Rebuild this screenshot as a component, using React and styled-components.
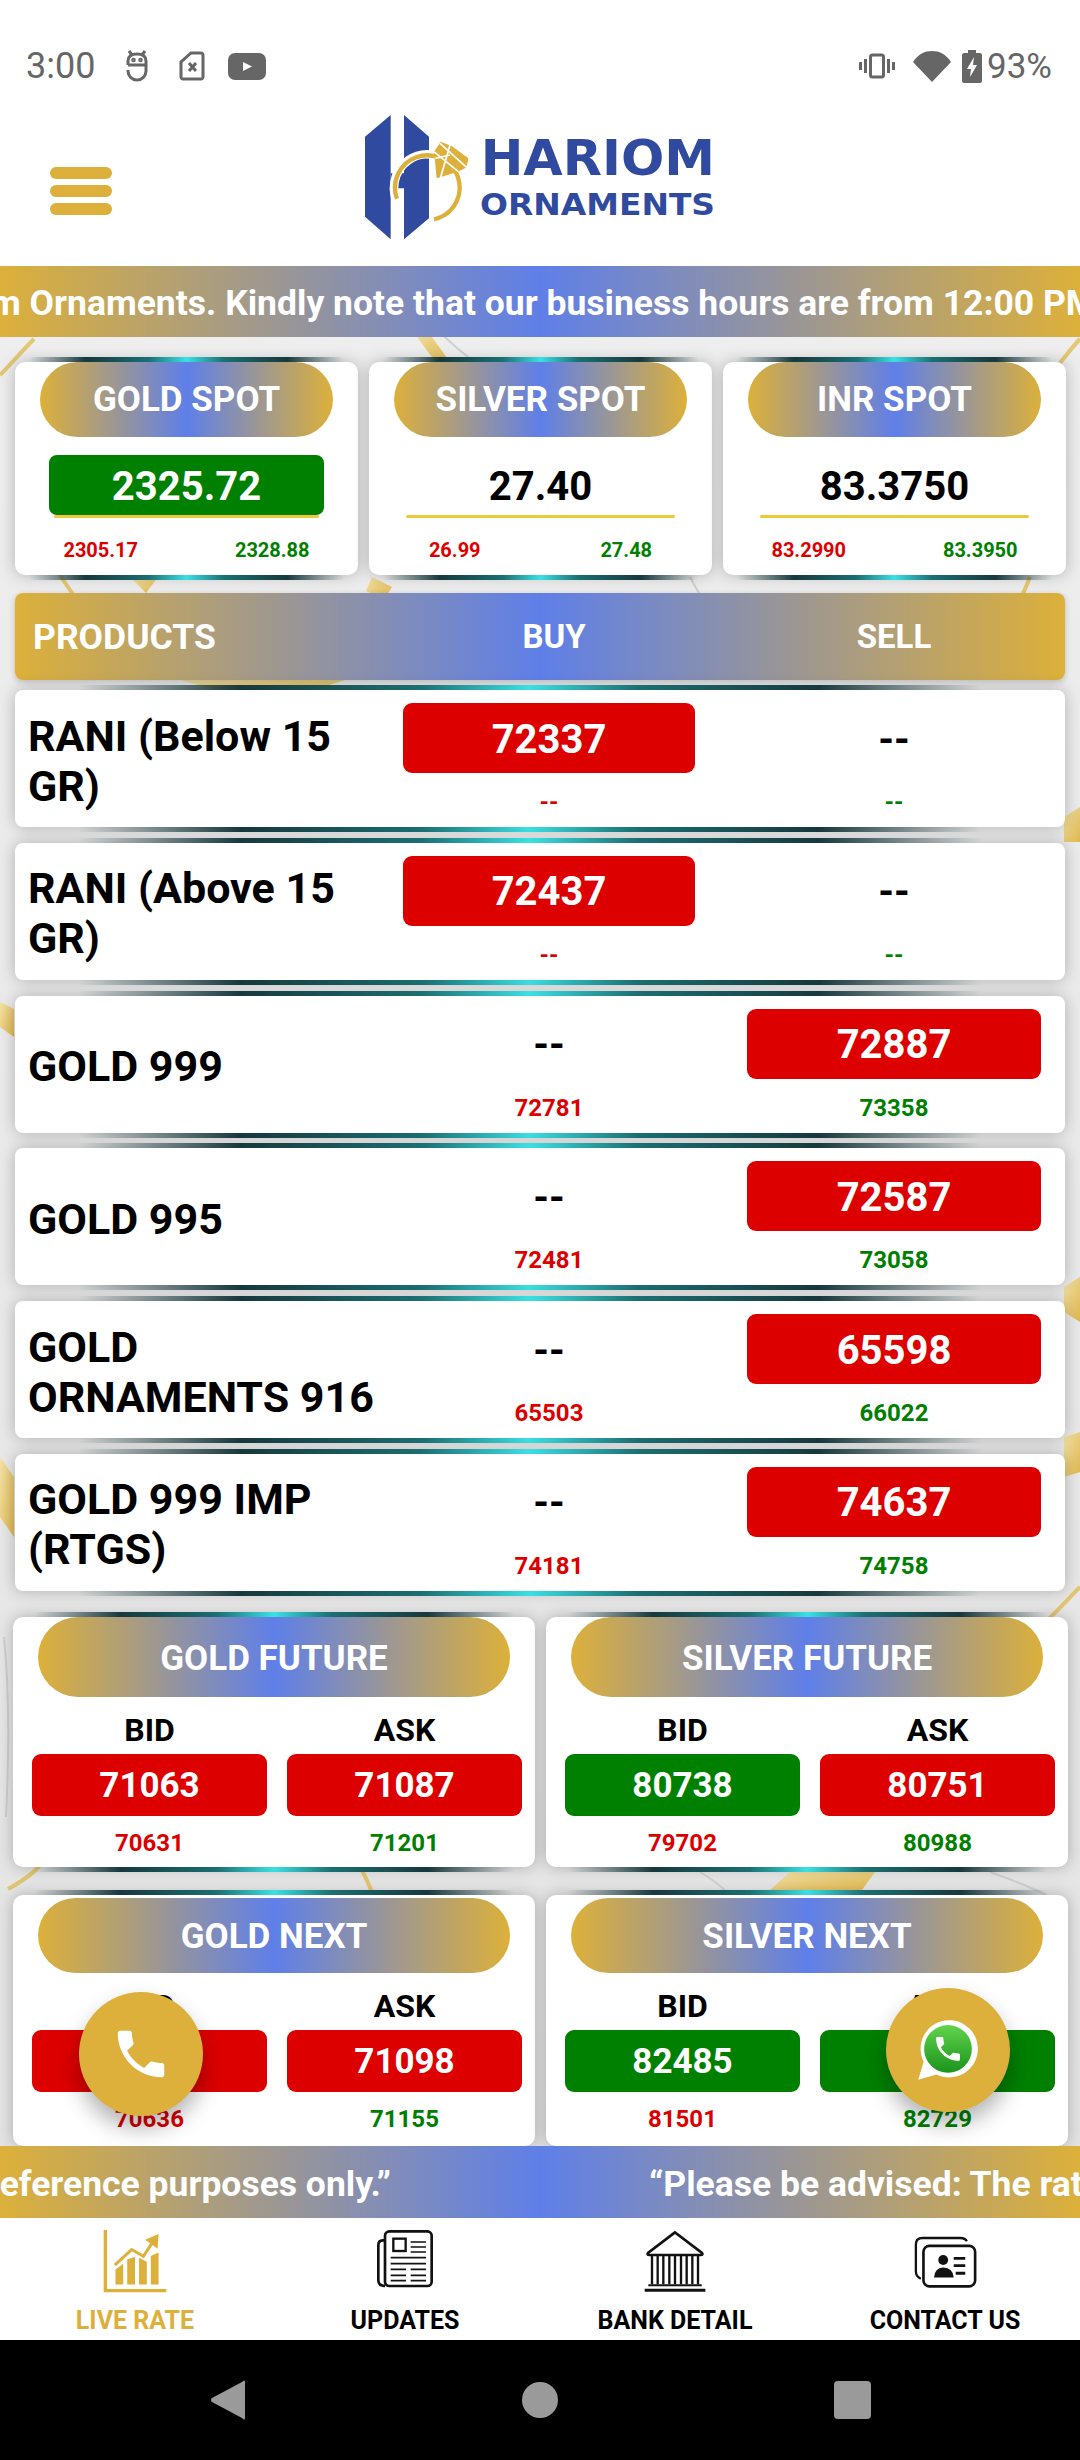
import React from "react";
import styled, { createGlobalStyle, css } from "styled-components";

const GOLD = "#dcb03a";
const BLUE = "#5f7fe8";
const RED = "#dd0000";
const GREEN = "#008000";
const band = `linear-gradient(90deg, ${GOLD} 0%, ${BLUE} 50%, ${GOLD} 100%)`;
const teal =
  "linear-gradient(90deg, rgba(23,57,61,0) 0%, #17393d 18%, #1b6f72 38%, #3be0e4 50%, #1b6f72 62%, #17393d 82%, rgba(23,57,61,0) 100%)";

const products = [
  { name: "RANI (Below 15 GR)", buy: "72337", sell: "--", low: "--", high: "--" },
  { name: "RANI (Above 15 GR)", buy: "72437", sell: "--", low: "--", high: "--" },
  { name: "GOLD 999", buy: "--", sell: "72887", low: "72781", high: "73358" },
  { name: "GOLD 995", buy: "--", sell: "72587", low: "72481", high: "73058" },
  { name: "GOLD ORNAMENTS 916", buy: "--", sell: "65598", low: "65503", high: "66022" },
  { name: "GOLD 999 IMP (RTGS)", buy: "--", sell: "74637", low: "74181", high: "74758" },
];

const quotes = [
  { title: "GOLD FUTURE", bid: "71063", ask: "71087", bidTone: RED, askTone: RED, low: "70631", high: "71201" },
  { title: "SILVER FUTURE", bid: "80738", ask: "80751", bidTone: GREEN, askTone: RED, low: "79702", high: "80988" },
  { title: "GOLD NEXT", bid: "71074", ask: "71098", bidTone: RED, askTone: RED, low: "70636", high: "71155", next: true },
  { title: "SILVER NEXT", bid: "82485", ask: "82512", bidTone: GREEN, askTone: GREEN, low: "81501", high: "82729", next: true },
];

const PHONE =
  "M6.62 10.79c1.44 2.83 3.76 5.14 6.59 6.59l2.2-2.2c.27-.27.67-.36 1.02-.24 1.12.37 2.33.57 3.57.57.55 0 1 .45 1 1V20c0 .55-.45 1-1 1-9.39 0-17-7.61-17-17 0-.55.45-1 1-1h3.5c.55 0 1 .45 1 1 0 1.25.2 2.45.57 3.57.11.35.03.74-.25 1.02l-2.2 2.2z";

const Logo = () => (
  <LogoSvg viewBox="0 0 1260 510">
    <path d="M105 140 182 75V448L105 380Z" fill="#2f4a9f" />
    <path d="M222 75 297 140V385L222 448V295H182V250H222Z" fill="#2f4a9f" />
    <circle cx="292" cy="293" r="100" fill="none" stroke="#fff" strokeWidth="26" strokeDasharray="440 190" transform="rotate(-215 292 293)" />
    <circle cx="292" cy="293" r="97" fill="none" stroke={GOLD} strokeWidth="13" strokeDasharray="470 160" transform="rotate(-200 292 293)" />
    <path d="M332 155 365 168 415 205 410 232 385 245 320 265 312 185Z" fill={GOLD} />
    <path d="M312 185 385 245M360 165 332 262M330 160 410 232M316 205 360 195" stroke="#fff" strokeWidth="5" fill="none" />
    <LogoWord x="452" y="255" fontSize="148" textLength="703" lengthAdjust="spacingAndGlyphs">HARIOM</LogoWord>
    <LogoWord x="450" y="375" fontSize="90" textLength="705" lengthAdjust="spacingAndGlyphs">ORNAMENTS</LogoWord>
  </LogoSvg>
);

const Marble = () => (
  <MarbleSvg viewBox="0 0 1080 1809" preserveAspectRatio="none">
    <defs>
      <linearGradient id="vein" x1="0" y1="0" x2="1" y2="1">
        <stop offset="0" stopColor="#f3e3a8" />
        <stop offset="1" stopColor="#dfb74f" />
      </linearGradient>
    </defs>
    <g fill="none" stroke="#e0bf5c" strokeWidth="4" opacity="0.85">
      <path d="M0 38C12 26 22 14 34 2" />
      <path d="M60 238C75 262 90 280 112 308" />
      <path d="M1030 240C1024 256 1016 272 1006 290" />
      <path d="M1060 26C1068 16 1074 8 1080 2" />
      <path d="M8 1552C30 1540 40 1530 44 1522" />
      <path d="M360 1530C366 1540 370 1550 374 1560" />
      <path d="M1040 1290C1056 1276 1068 1262 1080 1250" />
    </g>
    <g fill="url(#vein)">
      <path d="M410 -10 432 0 452 28 436 26Z" />
      <path d="M372 240 392 250 384 262 366 254Z" />
      <path d="M130 240 158 240 146 256Z" />
      <path d="M180 343 345 343 310 354 220 354Z" />
      <path d="M875 1535 862 1553 770 1553 790 1535Z" />
      <path d="M0 665 14 672 14 700 0 690Z" />
      <path d="M1064 950 1080 940 1080 985 1064 975Z" />
      <path d="M1064 480 1080 470 1080 505 1064 505Z" />
      <path d="M1064 1100 1080 1095 1080 1135 1064 1140Z" />
      <path d="M0 1120 14 1140 14 1200 0 1180Z" />
    </g>
    <g fill="none" stroke="#cfcfcf" strokeWidth="2">
      <path d="M440 -5C452 8 466 18 480 30" />
      <path d="M690 240C698 256 708 270 716 282" />
      <path d="M990 1535C1010 1542 1030 1550 1046 1558" />
      <path d="M700 1535C712 1542 722 1550 730 1558" />
      <path d="M4 1300C8 1340 10 1400 6 1480" />
    </g>
  </MarbleSvg>
);

const SpotBox = ({ title, value, low, high, boxed }) => (
  <SpotCard>
    <Pill>{title}</Pill>
    <SpotValue $boxed={boxed}>{value}</SpotValue>
    <GoldRule $boxed={boxed} />
    <SpotRange>
      <Sub $tone={RED} $size={20}>{low}</Sub>
      <Sub $tone={GREEN} $size={20}>{high}</Sub>
    </SpotRange>
  </SpotCard>
);

const PriceCell = ({ value, sub, tone, wide }) => (
  <Cell $wide={wide}>
    {value === "--" ? <Plain>--</Plain> : <PriceBox $tone={RED}>{value}</PriceBox>}
    <RowSub $tone={tone}>{sub}</RowSub>
  </Cell>
);

const QuoteCard = ({ q }) => (
  <Quote>
    <QuotePill $next={q.next}>{q.title}</QuotePill>
    <QuoteGrid>
      <QuoteLabel>BID</QuoteLabel>
      <QuoteLabel>ASK</QuoteLabel>
      <QuoteBox $tone={q.bidTone}>{q.bid}</QuoteBox>
      <QuoteBox $tone={q.askTone}>{q.ask}</QuoteBox>
      <Sub $tone={RED} $size={24}>{q.low}</Sub>
      <Sub $tone={GREEN} $size={24}>{q.high}</Sub>
    </QuoteGrid>
  </Quote>
);

export default function App() {
  return (
    <Page>
      <GlobalStyle />
      <StatusBar>
        <Time>3:00</Time>
        <StatusIcon $gap={30} width="24" height="32" viewBox="0 0 24 32" fill="none" stroke="#666" strokeWidth="3">
          <path d="M3 15V11C3 6 7 4 12 4s9 2 9 7V21C21 26 17 30 12 30S3 26 3 21V20M3 15H21M4 1l3 4M20 1l-3 4" />
          <circle cx="8.500" cy="10" r="0.800" fill="#666" />
          <circle cx="15.500" cy="10" r="0.800" fill="#666" />
        </StatusIcon>
        <StatusIcon $gap={30} width="26" height="30" viewBox="0 0 26 30" fill="none" stroke="#666" strokeWidth="3">
          <path d="M12 2h10c1 0 2 1 2 2v22c0 1-1 2-2 2H4c-1 0-2-1-2-2V11ZM10 12l7 8M17 12l-7 8" />
        </StatusIcon>
        <StatusIcon $gap={23} width="38" height="27" viewBox="0 0 38 27">
          <rect width="38" height="27" rx="7" fill="#666" />
          <path d="M15 9l9 4.500-9 4.500z" fill="#fff" />
        </StatusIcon>
        <StatusRight>
          <StatusIcon width="36" height="26" viewBox="0 0 36 26" fill="none" stroke="#666" strokeWidth="3">
            <rect x="11.500" y="2" width="13" height="22" rx="2" />
            <path d="M6.500 6v14M1.500 9v8M29.500 6v14M34.500 9v8" />
          </StatusIcon>
          <StatusIcon $gap={18} width="38" height="32" viewBox="0 0 38 32">
            <path d="M0 12C5 4 12 1 19 1s14 3 19 11L19 32Z" fill="#666" />
          </StatusIcon>
          <StatusIcon $gap={11} width="20" height="33" viewBox="0 0 20 33">
            <path d="M6 0h8v3h4c1 0 2 1 2 2v26c0 1-1 2-2 2H2c-1 0-2-1-2-2V5c0-1 1-2 2-2h4Z" fill="#666" />
            <path d="M12 7 5 19h4l-1 8 7-12h-4Z" fill="#fff" />
          </StatusIcon>
          <Percent>93%</Percent>
        </StatusRight>
      </StatusBar>

      <Header>
        <Burger>
          <span />
          <span />
          <span />
        </Burger>
        <Logo />
      </Header>

      <Ticker>
        <TickerText $shift={-10}>m Ornaments. Kindly note that our business hours are from 12:00 PM</TickerText>
      </Ticker>

      <Main>
        <Marble />
        <SpotGrid>
          <SpotBox title="GOLD SPOT" value="2325.72" low="2305.17" high="2328.88" boxed />
          <SpotBox title="SILVER SPOT" value="27.40" low="26.99" high="27.48" />
          <SpotBox title="INR SPOT" value="83.3750" low="83.2990" high="83.3950" />
        </SpotGrid>

        <TableHead>
          <span>PRODUCTS</span>
          <HeadCol>BUY</HeadCol>
          <HeadCol>SELL</HeadCol>
        </TableHead>

        <Rows>
          {products.map((p) => (
            <Row key={p.name}>
              <RowName>{p.name}</RowName>
              <PriceCell value={p.buy} sub={p.low} tone={RED} />
              <PriceCell value={p.sell} sub={p.high} tone={GREEN} wide />
            </Row>
          ))}
        </Rows>

        <QuoteGridOuter>
          {quotes.map((q) => (
            <QuoteCard key={q.title} q={q} />
          ))}
        </QuoteGridOuter>

        <Fab $left={79} $top={1655}>
          <svg width="62" height="62" viewBox="0 0 24 24">
            <path d={PHONE} fill="#fff" />
          </svg>
        </Fab>
        <Fab $left={886} $top={1651}>
          <svg width="70" height="70" viewBox="0 0 66 66">
            <defs>
              <linearGradient id="wa" x1="0" y1="0" x2="0" y2="1">
                <stop offset="0" stopColor="#62d34c" />
                <stop offset="1" stopColor="#1a941c" />
              </linearGradient>
            </defs>
            <path d="M5 61 10 44A27 27 0 1 1 22 56Z" fill="#fff" />
            <circle cx="33" cy="32" r="22.500" fill="url(#wa)" />
            <path d={PHONE} fill="#fff" transform="translate(18 17) scale(1.25)" />
          </svg>
        </Fab>
      </Main>

      <Ticker $bottom>
        <TickerText $shift={-13}>
          reference purposes only.”<TickerGap />“Please be advised: The rates
        </TickerText>
      </Ticker>

      <Nav>
        <NavItem $active>
          <svg width="64" height="64" viewBox="70 15 190 190">
            <path d="M77 18V198H258" fill="none" stroke={GOLD} strokeWidth="10" />
            <path d="M107 135 130 118V180H107ZM142 105 165 98V180H142ZM177 100 200 112V180H177ZM212 95 235 85V180H212Z" fill={GOLD} />
            <path d="M105 122 155 76 190 96 216 56" fill="none" stroke={GOLD} strokeWidth="9" />
            <path d="M195 47 235 30 232 74Z" fill={GOLD} />
          </svg>
          <NavLabel>LIVE RATE</NavLabel>
        </NavItem>
        <NavItem>
          <svg width="58" height="60" viewBox="888 22 174 178" fill="none" stroke="#111">
            <rect x="915" y="28" width="140" height="164" rx="13" strokeWidth="8" />
            <path d="M915 55H908Q895 55 895 70V175Q895 192 915 192" strokeWidth="8" />
            <rect x="940" y="50" width="37" height="37" strokeWidth="7" />
            <path d="M992 60H1038M992 75H1038M992 90H1038M932 107H1038M932 125H1038M932 142H978M992 142H1038M932 160H978M992 160H1038M932 176H978M992 176H1038" strokeWidth="5" />
          </svg>
          <NavLabel>UPDATES</NavLabel>
        </NavItem>
        <NavItem>
          <svg width="62" height="64" viewBox="72 15 186 190" fill="none" stroke="#111">
            <path d="M165 24 84 86Q80 92 88 92H242Q250 92 246 86Z" strokeWidth="8" />
            <path d="M96 95V180M113 95V180M130 95V180M148 95V180M165 95V180M183 95V180M200 95V180M217 95V180M234 95V180" strokeWidth="7" />
            <path d="M85 183H245" strokeWidth="6" />
            <path d="M74 198H256" strokeWidth="9" />
          </svg>
          <NavLabel>BANK DETAIL</NavLabel>
        </NavItem>
        <NavItem>
          <ContactIcon width="63" height="52" viewBox="880 32 190 158" fill="none" stroke="#111">
            <path d="M1040 48Q1035 38 1020 38H905Q885 38 885 58V140Q885 155 900 162" strokeWidth="7" />
            <rect x="908" y="62" width="157" height="123" rx="18" strokeWidth="8" />
            <circle cx="968" cy="105" r="15" fill="#111" stroke="none" />
            <path d="M940 158Q942 130 968 128Q998 130 1000 158Z" fill="#111" stroke="none" />
            <path d="M1000 100H1035M1000 122H1035M1006 145H1035" strokeWidth="9" />
          </ContactIcon>
          <NavLabel>CONTACT US</NavLabel>
        </NavItem>
      </Nav>

      <SystemBar>
        <svg width="36" height="40" viewBox="0 0 36 40">
          <path d="M35 2V38Q35 41 32 38L2 22Q0 20 2 18L32 2Q35 -1 35 2Z" fill="#9a9a9a" />
        </svg>
        <HomeDot />
        <RecentSquare />
      </SystemBar>
    </Page>
  );
}

const GlobalStyle = createGlobalStyle`
  html, body { margin: 0; padding: 0; background: #fff; }
  * { box-sizing: border-box; }
  body { font-family: Roboto, "Liberation Sans", sans-serif; }
`;

const Page = styled.div`
  width: 1080px;
  height: 2460px;
  display: flex;
  flex-direction: column;
  overflow: hidden;
`;

const StatusBar = styled.div`
  height: 90px;
  padding: 42px 28px 0 26px;
  display: flex;
  align-items: center;
  color: #666;
`;

const Time = styled.span`
  font-size: 36px;
`;

const StatusIcon = styled.svg`
  flex: none;
  margin-left: ${(p) => p.$gap || 0}px;
`;

const StatusRight = styled.div`
  margin-left: auto;
  display: flex;
  align-items: center;
`;

const Percent = styled.span`
  font-size: 35px;
  margin-left: 5px;
`;

const Header = styled.div`
  height: 176px;
  display: flex;
  align-items: flex-start;
  padding-left: 50px;
`;

const Burger = styled.div`
  width: 62px;
  margin: 77px 218px 0 0;
  display: flex;
  flex-direction: column;
  gap: 6px;

  span {
    height: 12px;
    border-radius: 6px;
    background: ${GOLD};
  }
`;

const LogoSvg = styled.svg`
  width: 420px;
  height: 170px;
  flex: none;
`;

const LogoWord = styled.text`
  font-family: "DejaVu Sans", sans-serif;
  font-weight: 700;
  fill: #2f4a9f;
`;

const Ticker = styled.div`
  height: ${(p) => (p.$bottom ? 72 : 71)}px;
  padding-top: 3px;
  flex: none;
  background: ${band};
  display: flex;
  align-items: center;
  overflow: hidden;
  white-space: nowrap;
  position: relative;
  z-index: 2;
`;

const TickerText = styled.div`
  margin-left: ${(p) => p.$shift}px;
  color: #fff;
  font-size: 35.500px;
  font-weight: 700;
`;

const TickerGap = styled.span`
  display: inline-block;
  width: 258px;
`;

const Main = styled.div`
  position: relative;
  flex: 1;
  padding-top: 25px;
  background: linear-gradient(180deg, #eeeeee, #e4e4e4);
  overflow: hidden;
`;

const MarbleSvg = styled.svg`
  position: absolute;
  inset: 0;
  width: 100%;
  height: 100%;
  filter: blur(0.6px);
`;

const glow = css`
  position: relative;
  background: #fff;
  box-shadow: 0 0 16px rgba(0, 0, 0, 0.25);

  &::before,
  &::after {
    content: "";
    position: absolute;
    left: 4%;
    right: 4%;
    height: 5px;
    background: ${teal};
  }

  &::before {
    top: -5px;
  }

  &::after {
    bottom: -5px;
  }
`;

const SpotGrid = styled.div`
  position: relative;
  display: grid;
  grid-template-columns: repeat(3, 343px);
  column-gap: 11px;
  padding: 0 15px;
`;

const SpotCard = styled.div`
  ${glow}
  height: 213px;
  border-radius: 10px;
`;

const pillBase = css`
  background: ${band};
  color: #fff;
  font-weight: 700;
  display: flex;
  align-items: center;
  justify-content: center;
`;

const Pill = styled.div`
  ${pillBase}
  height: 75px;
  margin: 0 25px;
  border-radius: 38px;
  font-size: 35px;
`;

const SpotValue = styled.div`
  height: 60px;
  margin: 18px 34px 0;
  padding-top: 2px;
  border-radius: 8px;
  display: flex;
  align-items: center;
  justify-content: center;
  font-size: 40px;
  font-weight: 700;
  color: ${(p) => (p.$boxed ? "#fff" : "#000")};
  background: ${(p) => (p.$boxed ? GREEN : "transparent")};
`;

const GoldRule = styled.div`
  height: 3px;
  margin: 0 ${(p) => (p.$boxed ? 39 : 37)}px;
  border-radius: 2px;
  background: #f0c83c;
`;

const SpotRange = styled.div`
  display: grid;
  grid-template-columns: 1fr 1fr;
  margin-top: 17px;
`;

const Sub = styled.div`
  text-align: center;
  font-size: ${(p) => p.$size}px;
  line-height: 30px;
  font-weight: 700;
  color: ${(p) => p.$tone};
`;

const TableHead = styled.div`
  position: relative;
  height: 87px;
  margin: 18px 15px 0;
  padding: 0 24px 0 18px;
  border-radius: 8px;
  background: ${band};
  color: #fff;
  font-size: 35.500px;
  font-weight: 700;
  display: grid;
  grid-template-columns: 370px 302px 336px;
  align-items: center;
  box-shadow: 0 2px 6px rgba(0, 0, 0, 0.2);
`;

const HeadCol = styled.span`
  font-size: 33px;
  text-align: center;
  &:last-child {
    padding-left: 42px;
  }
`;

const Rows = styled.div`
  position: relative;
  margin: 10px 15px 0;
  display: flex;
  flex-direction: column;
  gap: 15.800px;
`;

const Row = styled.div`
  ${glow}
  height: 137px;
  border-radius: 8px;
  padding: 13px 24px 0 13px;
  display: grid;
  grid-template-columns: 375px 292px 346px;

  &::before,
  &::after {
    left: 6%;
    right: 8%;
  }
`;

const RowName = styled.div`
  align-self: center;
  margin-top: -9px;
  padding-right: 22px;
  font-size: 43px;
  line-height: 50px;
  font-weight: 700;
  color: #000;
`;

const Cell = styled.div`
  display: flex;
  flex-direction: column;
  margin-left: ${(p) => (p.$wide ? 52 : 0)}px;
`;

const PriceBox = styled.div`
  height: 70px;
  padding-top: 2px;
  border-radius: 9px;
  background: ${(p) => p.$tone};
  color: #fff;
  font-size: 40px;
  font-weight: 700;
  display: flex;
  align-items: center;
  justify-content: center;
`;

const Plain = styled(PriceBox)`
  background: transparent;
  color: #000;
`;

const RowSub = styled.div`
  margin-top: 14px;
  line-height: 30px;
  text-align: center;
  font-size: 24px;
  font-weight: 700;
  color: ${(p) => p.$tone};
`;

const QuoteGridOuter = styled.div`
  position: relative;
  margin-top: 26px;
  padding: 0 12px 0 13px;
  display: grid;
  grid-template-columns: 522px 522px;
  column-gap: 11px;
  row-gap: 28px;
`;

const Quote = styled.div`
  ${glow}
  height: 251px;
  border-radius: 10px;

  &:nth-child(-n + 2) {
    height: 250px;
  }
`;

const QuotePill = styled.div`
  ${pillBase}
  height: ${(p) => (p.$next ? 75 : 80)}px;
  margin: ${(p) => (p.$next ? 3 : 0)}px 25px 0;
  padding-top: 3px;
  border-radius: 40px;
  font-size: 35px;
`;

const QuoteGrid = styled.div`
  display: grid;
  grid-template-columns: 235px 235px;
  column-gap: 20px;
  padding-left: 19px;
`;

const QuoteLabel = styled.div`
  margin-top: 14px;
  height: 38px;
  line-height: 38px;
  font-size: 32px;
  font-weight: 700;
  text-align: center;
  color: #000;
`;

const QuoteBox = styled.div`
  height: 62px;
  margin: 5px 0 12px;
  padding-top: 2px;
  border-radius: 9px;
  background: ${(p) => p.$tone};
  color: #fff;
  font-size: 35px;
  font-weight: 700;
  display: flex;
  align-items: center;
  justify-content: center;
`;

const Fab = styled.div`
  position: absolute;
  left: ${(p) => p.$left}px;
  top: ${(p) => p.$top}px;
  width: 124px;
  height: 124px;
  border-radius: 50%;
  background: ${GOLD};
  box-shadow: 0 12px 22px rgba(0, 0, 0, 0.3);
  display: flex;
  align-items: center;
  justify-content: center;
`;

const Nav = styled.div`
  height: 122px;
  flex: none;
  background: #fff;
  display: grid;
  grid-template-columns: repeat(4, 270px);
`;

const NavItem = styled.div`
  padding-top: 11px;
  height: 122px;
  display: flex;
  flex-direction: column;
  align-items: center;
  color: ${(p) => (p.$active ? GOLD : "#000")};

  svg {
    flex: none;
  }
`;

const ContactIcon = styled.svg`
  margin: 7px 0 5px;
`;

const NavLabel = styled.div`
  position: absolute;
  margin-top: 77px;
  line-height: 30px;
  font-size: 25px;
  font-weight: 700;
`;

const SystemBar = styled.div`
  height: 120px;
  flex: none;
  background: #000;
  display: flex;
  align-items: center;
  justify-content: center;
  gap: 276px;
`;

const HomeDot = styled.div`
  width: 36px;
  height: 36px;
  border-radius: 50%;
  background: #9a9a9a;
`;

const RecentSquare = styled.div`
  width: 37px;
  height: 38px;
  border-radius: 4px;
  background: #9a9a9a;
`;
